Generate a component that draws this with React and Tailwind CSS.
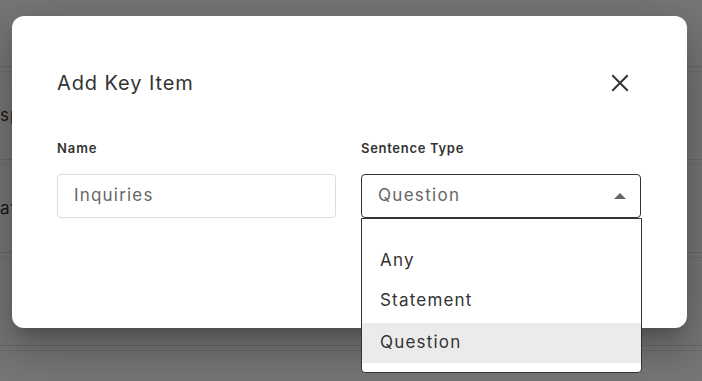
export default function App() {
  const font = { fontFamily: "Inter, 'Noto Sans', sans-serif" };
  return (
    <div className="relative w-[702px] h-[381px] overflow-hidden bg-white" style={font}>
      {/* underlying page */}
      <div className="absolute inset-0 flex flex-col bg-[#ececec]">
        <div className="h-[67px] border-b border-[#d0d0d0]" />
        <div className="h-[5px] border-b border-[#dadada]" />
        <div className="h-[88px] border-b border-[#d0d0d0] flex items-center text-[17px] text-[#333] tracking-[1px]">sp</div>
        <div className="h-[5px] border-b border-[#dadada]" />
        <div className="h-[88px] border-b border-[#d0d0d0] flex items-center text-[17px] text-[#333] tracking-[1px]">at</div>
        <div className="h-[5px] border-b border-[#dadada]" />
        <div className="h-[88px] border-b border-[#d0d0d0]" />
        <div className="h-[5px] border-b border-[#dadada]" />
      </div>
      <div className="absolute inset-0 bg-[rgba(0,0,0,0.5)]" />

      {/* modal */}
      <div className="absolute left-[12px] top-[16px] w-[675px] h-[312px] bg-white rounded-[12px] shadow-[0_11px_15px_-7px_rgba(0,0,0,0.2),0_24px_38px_3px_rgba(0,0,0,0.14),0_9px_46px_8px_rgba(0,0,0,0.12)] pl-[45px] pr-[46px] pt-[52px]">
        <div className="flex items-center justify-between h-[30px]">
          <h2 className="text-[20px] text-[#333] font-normal tracking-[0.9px]">Add Key Item</h2>
          <svg width="18" height="18" viewBox="0 0 18 18" className="mr-[12px]">
            <path d="M2 2 L16 16 M16 2 L2 16" stroke="#333" strokeWidth="2" strokeLinecap="square" />
          </svg>
        </div>
        <div className="flex gap-[25px] mt-[42px]">
          <div className="w-[279px] flex flex-col">
            <label className="text-[13px] font-semibold text-[#333] leading-[16px] tracking-[0.9px]">Name</label>
            <div className="mt-[18px] h-[44px] border border-[#dcdcdc] rounded-[4px] flex items-center pl-[16px] text-[17px] text-[#666] tracking-[1.2px]">
              Inquiries
            </div>
          </div>
          <div className="w-[280px] flex flex-col">
            <label className="text-[13px] font-semibold text-[#333] leading-[16px] tracking-[0.7px]">Sentence Type</label>
            <div className="mt-[18px] h-[44px] border border-[#333] rounded-[4px] flex items-center justify-between pl-[16px] pr-[14px] text-[17px] text-[#666] tracking-[1.3px]">
              <span>Question</span>
              <svg width="12" height="6" viewBox="0 0 12 6">
                <path d="M0 6 L6 0 L12 6 Z" fill="#666" />
              </svg>
            </div>
          </div>
        </div>
      </div>

      {/* dropdown menu */}
      <div className="absolute left-[361px] top-[218px] w-[281px] h-[155px] bg-white border border-[#333] rounded-b-[4px] pt-[22px] text-[17px] text-[#333] tracking-[1.2px]">
        <div className="h-[40px] flex items-center pl-[18px]">Any</div>
        <div className="h-[40px] flex items-center pl-[18px]">Statement</div>
        <div className="h-[40px] mt-[2px] flex items-center pl-[18px] bg-[#ebebeb]">Question</div>
      </div>
    </div>
  );
}
